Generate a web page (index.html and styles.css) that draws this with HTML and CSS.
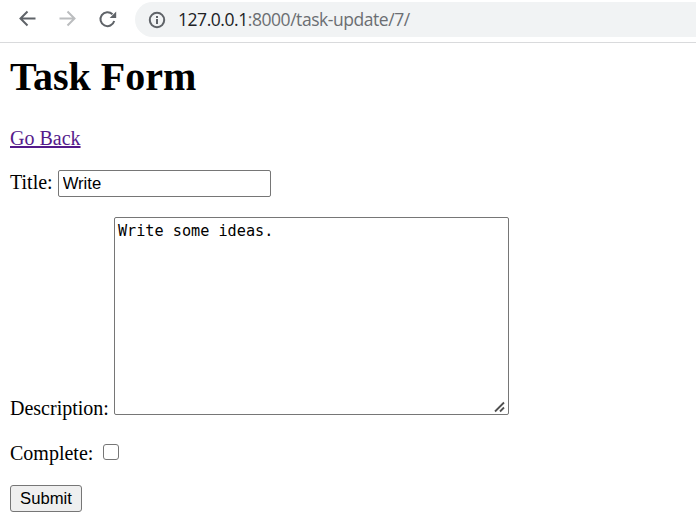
FILE: index.html
```html
<!DOCTYPE html>
<html lang="en">
<head>
<meta charset="utf-8">
<title>Task Form</title>
<link rel="stylesheet" href="styles.css">
</head>
<body>
<header class="toolbar">
  <svg class="nav" viewBox="0 0 20 20"><path d="M18.500 9.500H3.500M10.500 2.500L3.500 9.500l7 7"/></svg>
  <svg class="nav nav-off" viewBox="0 0 20 20"><path d="M2.500 9.500h15M10.500 2.500l7 7-7 7"/></svg>
  <svg class="nav" viewBox="0 0 20 20"><path d="M15.500 5.300A7 7 0 1 0 17.200 12"/><path class="solid" d="M19.200 2.500v6.500h-6.500z"/></svg>
  <div class="address">
    <svg class="info" viewBox="0 0 18 18"><circle cx="9" cy="9" r="7.200"/><path d="M9 8v5M9 5v2"/></svg>
    <span class="url"><span class="host">127.0.0.1</span>:8000/task-update/7/</span>
  </div>
</header>
<main class="page">
  <h1>Task Form</h1>
  <a class="back" href="#">Go Back</a>
  <form>
    <div class="row row-title"><label for="title">Title:</label><input id="title" class="text" type="text" value="Write"></div>
    <div class="row row-desc"><label for="desc">Description:</label><div class="area"><textarea id="desc" spellcheck="false">Write some ideas.</textarea><svg class="grip" viewBox="0 0 12 12"><path d="M1 10.500L10 1.500M6 10.500L10 6.500"/></svg></div></div>
    <div class="row row-check"><label for="done">Complete:</label><input id="done" class="check" type="checkbox"></div>
    <button class="submit" type="button">Submit</button>
  </form>
</main>
</body>
</html>
```
FILE: styles.css
```css
* { box-sizing: border-box; }
body { margin: 0; background: #fff; color: #000; font: 20px/23px "Liberation Serif", serif; overflow: hidden; }
.toolbar { display: flex; align-items: flex-start; height: 43px; padding: 2px 0 0 17px; border-bottom: 1px solid #d9dadc; }
.nav { width: 20px; height: 20px; margin: 7px 20px 0 0; fill: none; stroke: #5f6368; stroke-width: 2; }
.nav-off { stroke: #bbbdbf; }
.solid { fill: #5f6368; stroke: none; }
.address { flex: 1; display: flex; align-items: center; height: 35px; margin-left: -2px; padding-left: 13px; border-radius: 18px 0 0 18px; background: #f1f3f4; }
.info { width: 18px; height: 18px; fill: none; stroke: #5f6368; stroke-width: 2; }
.url { margin: -2px 0 0 12px; font: 17.5px/24px "Open Sans", sans-serif; letter-spacing: -0.45px; color: #6b6e72; white-space: nowrap; }
.host { color: #202124; }
.page { padding: 11px 10px 0; }
h1 { margin: 0; font-size: 40px; line-height: 46px; }
.back { display: block; width: max-content; margin-top: 27px; color: #551a8b; text-decoration-thickness: 2px; text-underline-offset: 1px; text-decoration-skip-ink: none; }
.row { display: flex; }
.row-title { margin-top: 20px; }
.row-title label { padding-top: 1px; }
.text { width: 213px; height: 27px; margin-left: 5px; padding: 1px 4px; border: 1px solid #767676; border-radius: 2px; font: 16.67px "Liberation Sans", sans-serif; }
.row-desc { margin-top: 20px; align-items: flex-end; }
.row-desc label { margin-bottom: -5px; }
.area { position: relative; width: 395px; height: 198px; margin-left: 5px; }
textarea { display: block; width: 100%; height: 100%; resize: none; padding: 3px; border: 1px solid #767676; border-radius: 2px; font: 15.2px/20px "DejaVu Sans Mono", monospace; }
.grip { position: absolute; right: 3px; bottom: 2px; width: 12px; height: 12px; fill: none; stroke: #505050; stroke-width: 1.8; }
.row-check { margin-top: 27px; }
.check { appearance: none; width: 16px; height: 16px; margin: 2px 0 0 10px; border: 1px solid #767676; border-radius: 3px; background: #fff; }
.submit { display: block; width: 72px; height: 27px; margin-top: 20px; padding: 0; border: 1px solid #767676; border-radius: 3px; background: #efefef; color: #000; font: 16.67px "Liberation Sans", sans-serif; }
```
